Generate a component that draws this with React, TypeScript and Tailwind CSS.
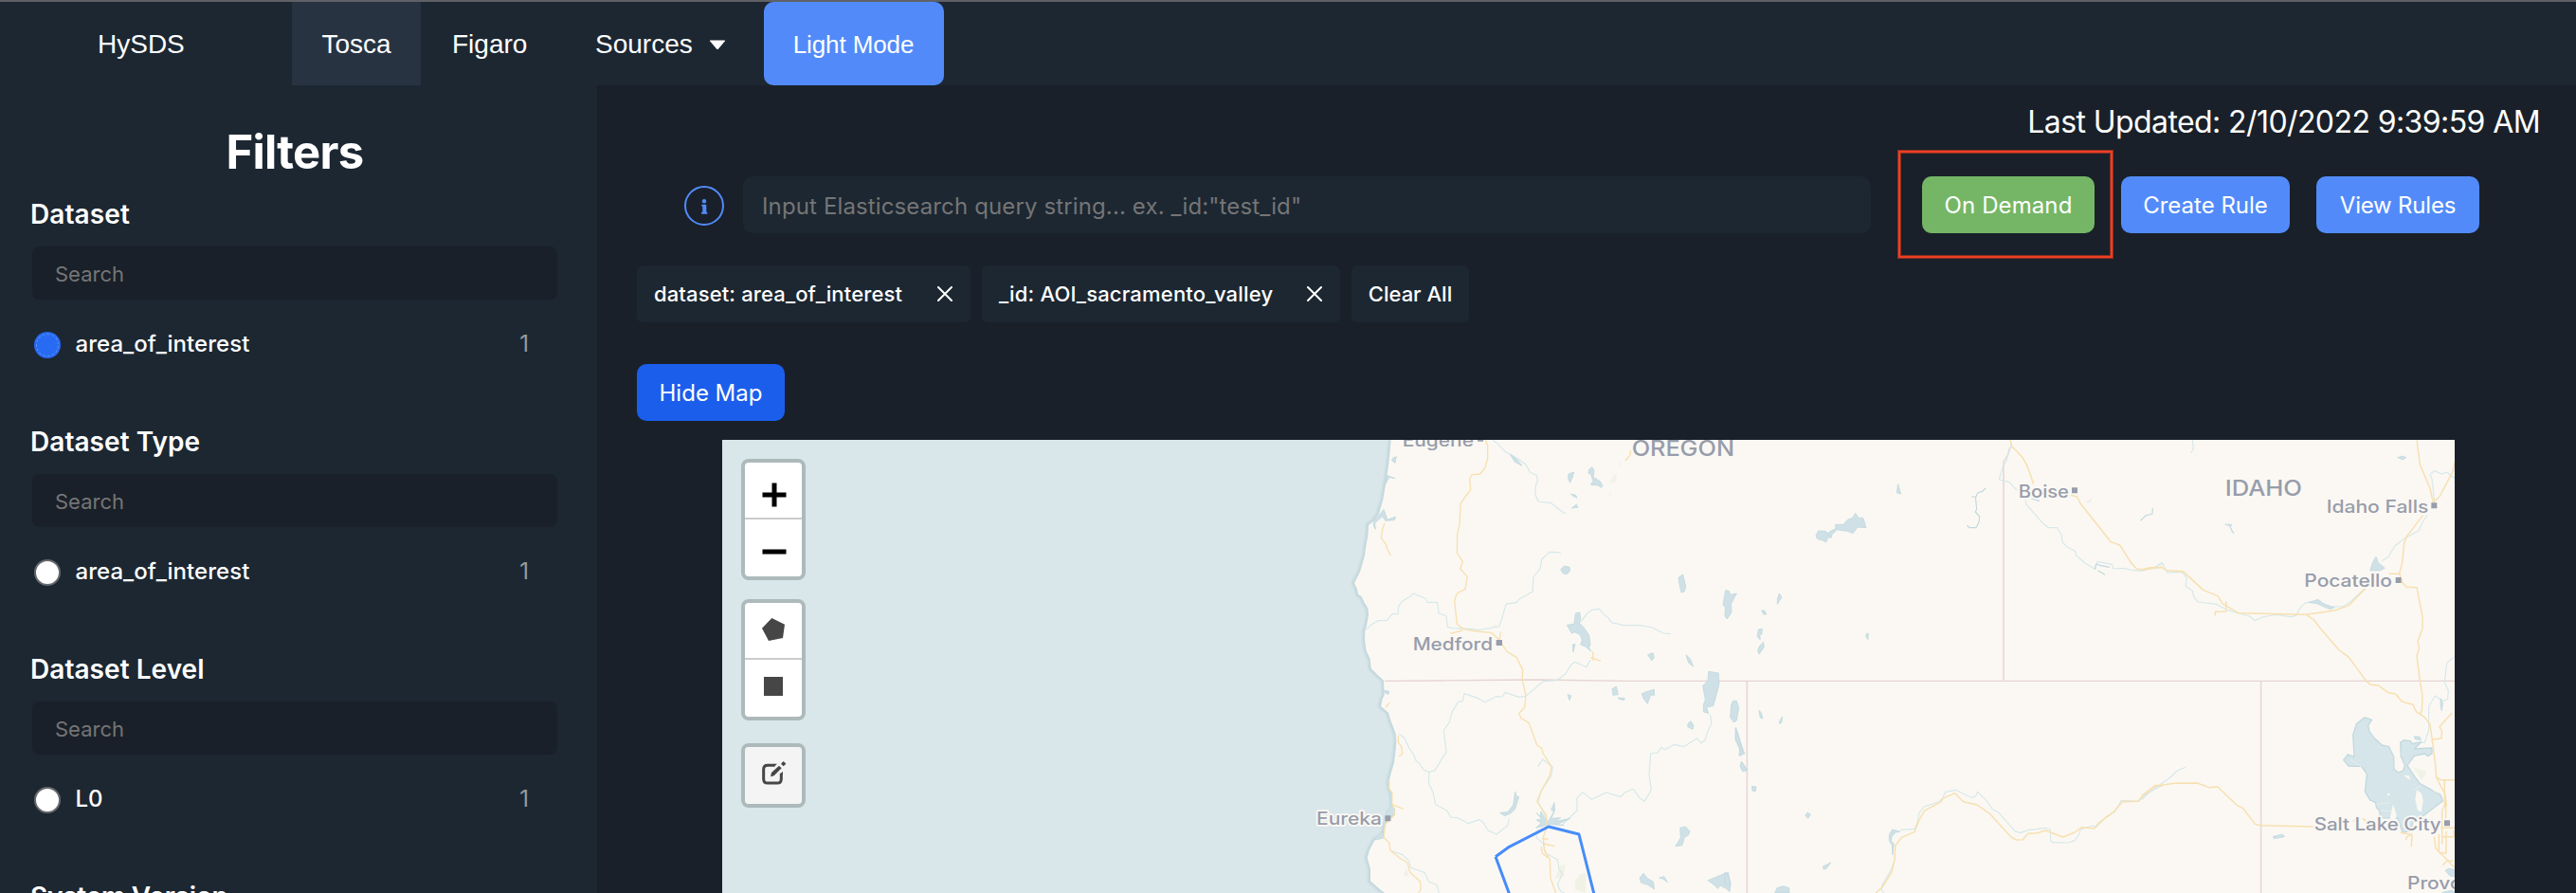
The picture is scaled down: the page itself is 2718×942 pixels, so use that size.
import React from "react";

type Group = { title: string; option?: string; count?: number; checked?: boolean; tracking: string };

const groups: Group[] = [
  { title: "Dataset", option: "area_of_interest", count: 1, checked: true, tracking: "tracking-[0.1px]" },
  { title: "Dataset Type", option: "area_of_interest", count: 1, tracking: "tracking-[0.05px]" },
  { title: "Dataset Level", option: "L0", count: 1, tracking: "tracking-[0.05px]" },
  { title: "System Version", tracking: "tracking-[-0.24px]" },
];

function Nav() {
  return (
    <nav className="flex h-[90px] shrink-0 items-stretch border-t-2 border-[#5f6166] bg-[#1c2732] font-['Liberation_Sans',sans-serif] text-[28px]">
      <a className="flex w-[308px] items-center pt-px pl-[103px]">HySDS</a>
      <a className="flex w-[136px] items-center bg-[#283341] pt-px pl-[31.500px]">Tosca</a>
      <a className="flex w-[184px] items-center pt-px pl-[33px]">Figaro</a>
      <a className="flex w-[178px] items-center pt-px">
        <span>Sources</span>
        <svg className="mt-px ml-[17px]" width="18" height="11" viewBox="0 0 18 11">
          <path d="M1.5 .5h15q1 0 .3 1L10 9.6q-1 1-2 0L1.200 1.500q-.7-1 .3-1z" fill="#fff" />
        </svg>
      </a>
      <button className="w-[190px] rounded-[10px] bg-[#528bf9] pt-[2px] pr-px text-[26px] tracking-[-0.1px]">Light Mode</button>
    </nav>
  );
}

function FilterGroup({ title, option, count, checked, tracking }: Group) {
  return (
    <section className="h-[240px] shrink-0 pr-[42px] pl-[34px]">
      <h2 className={`-ml-[2px] h-10 text-[28px] leading-10 font-semibold ${tracking}`}>{title}</h2>
      {option && (
        <>
          <input
            placeholder="Search"
            className="mt-[14px] block h-14 w-full rounded-lg bg-[#192029] pt-[2px] pl-[24px] text-[22px] placeholder:text-[#757575] placeholder:opacity-100"
          />
          <label className="mt-[27px] flex h-10 items-center pr-[30px] pl-[2px] text-[24px]">
            <span
              className={
                checked
                  ? "mt-px flex size-7 items-center justify-center rounded-full bg-[#286bf3]"
                  : "mt-px size-7 rounded-full border-2 border-[#66696c] bg-white"
              }
            >
              {checked && <span className="size-6 rounded-full border border-dashed border-[#5b8ff5]" />}
            </span>
            <span className="ml-[15.500px] flex-1 font-medium tracking-[0.05px]">{option}</span>
            <span className="text-[#999b9e]">{count}</span>
          </label>
        </>
      )}
    </section>
  );
}

function Sidebar() {
  return (
    <aside className="flex w-[630px] shrink-0 flex-col overflow-hidden bg-[#1c2732]">
      <h1 className="mt-[41px] mb-[15px] h-[60px] shrink-0 pr-[8px] text-center text-[49px] leading-[60px] font-bold tracking-[-0.7px]">Filters</h1>
      {groups.map((g) => (
        <FilterGroup key={g.title} {...g} />
      ))}
    </aside>
  );
}

function Cross() {
  return (
    <svg width="16" height="16" viewBox="0 0 16 16" stroke="#fff" strokeWidth="2" strokeLinecap="round">
      <path d="M1 1L15 15M15 1L1 15" />
    </svg>
  );
}

function MapLabel({ x, y, w, size = 54, children }: { x: number; y: number; w: number; size?: number; children: string }) {
  return (
    <text
      x={x - 3}
      y={y}
      textLength={w + 5}
      lengthAdjust="spacingAndGlyphs"
      fontSize={size}
      fill="#979dab"
      stroke="#fbf8f3"
      strokeWidth="10"
      strokeLinejoin="round"
      paintOrder="stroke"
      className="font-['Inter',sans-serif] font-medium"
    >
      {children}
    </text>
  );
}

const coast =
  "M263 42L258 100L250 160L238 230L225 275L210 298L192 312L190 345L182 390L180 408L165 460L147 495L156 515L160 532L170 538L178 555L190 575L192 595L186 630L181 645L180 675L185 710L197 735L200 765L220 785L240 803L242 850L236 862L231 885L255 905L262 930L268 945L278 972L280 1000L277 1030L273 1065L268 1080L257 1120L258 1145L266 1160L268 1200L276 1210L276 1225L262 1240L243 1262L240 1300L212 1308L195 1340L188 1365L198 1400L198 1438L225 1462L243 1476";

const riversWest = [
  "M585 42L605 58L625 80L650 92L690 120L703 145L725 155L727 172L720 190L720 215L729 237L770 242L790 258L805 270L817 275",
  "M183 643L200 628L222 614L250 613L268 592L285 594L287 568L300 552L320 540L335 528L374 545L378 556L410 556L414 590L438 600L442 634L456 638L520 640L540 644L605 633L615 605L627 562L660 556L670 545L712 522L713 477L735 450L740 420L765 397L795 398L800 402",
  "M865 617L885 590L900 580L923 577L935 592L950 604L960 620L1000 629L1050 629L1090 636L1125 654L1148 656",
  "M895 737L882 761L845 745L833 754L815 783L788 803L745 806L717 830L690 853L670 857L625 841L615 855L596 854L560 872L540 860L495 845L490 868L475 872L456 904L447 938L430 960L438 1030L428 1045L402 1088L383 1094L365 1085L355 1068L340 1055L336 1040L322 1020L305 985L288 973",
  "M383 1094L383 1130L397 1160L404 1196L440 1215L452 1236L475 1238L508 1256L542 1244L555 1252L570 1278L597 1290L633 1262L637 1240",
  "M1273 910L1278 940L1265 965L1258 990L1245 1002L1232 986L1190 1013L1160 1006L1130 1022L1118 1015L1108 1032L1085 1035L1080 1100L1087 1150L1065 1186L1050 1175L1030 1147L1003 1158L990 1172L945 1158L898 1180L870 1157L852 1175L852 1215L805 1260",
  "M728 1076L743 1053L775 1078L770 1105L738 1155L728 1190L745 1215L758 1262",
  "M728 1275L723 1300L745 1320L752 1350L790 1370L795 1400L805 1415L790 1450L800 1470L812 1476",
  "M262 1342L300 1355L320 1375L325 1395L370 1412L382 1440L408 1450L415 1476",
];
const riversMid = [
  "M905 42L905 65L890 110L880 125L868 168L900 176L925 202",
  "M952 232L953 245L1010 310L1025 320L1052 320L1066 345L1068 365L1082 380L1110 395L1112 408L1140 432L1170 450L1180 427L1225 436L1230 450L1265 448L1280 453L1318 457L1360 446L1385 430",
  "M555 1277L600 1273L608 1258L615 1222L630 1203L675 1188L690 1175L697 1157L730 1150L780 1174L793 1170L800 1156L825 1180L848 1212L865 1220L918 1280L935 1286L960 1277L1015 1270L1030 1276L1031 1310L1040 1316L1088 1317L1107 1310L1122 1290L1125 1275L1165 1263L1175 1268L1210 1232L1235 1218L1255 1183L1310 1186L1335 1162L1385 1135",
  "M538 1370L525 1405L498 1450L495 1465L503 1476",
];
const riversEast = [
  "M160 42L163 70L155 84",
  "M0 452L40 446L65 432L80 462L125 460L142 478L138 505L160 520L165 540L178 555L235 562L270 580L340 600L358 614L380 603L425 595L470 602L488 598L500 575L520 556L555 560L600 570L635 570L660 555L705 512",
  "M760 425L780 412L800 378L835 352L875 330L890 300L903 280",
  "M926 235L918 165L912 152L925 140L950 150L965 144L992 166",
  "M990 727L965 748L958 810L970 835L968 862L955 868L928 852L908 885L908 960L895 1000L883 1000",
  "M0 1180L15 1165L45 1142L90 1110L110 1090L138 1078",
];
const roadsWest = [
  "M562 42L569 60L569 100L560 132L545 150L520 152L512 165L515 200L498 222L483 245L480 310L473 340L472 400L490 427L482 450L505 475L498 514L472 528L464 550L472 625L492 641L535 648L580 652L606 675L630 712L660 730L680 770L678 800L690 850L686 888L668 908L675 923L700 938L725 1008L740 1018L745 1035L771 1076L765 1105L740 1150L725 1185L740 1210L755 1230L757 1265L745 1300L748 1340L766 1370L768 1430L785 1476",
  "M450 655L490 645M606 675L610 650M738 1328L742 1350L760 1365M742 1305L760 1305M745 1320L782 1328",
  "M243 305L236 325L232 353L247 372L250 385L262 408M1022 75L1020 90L1005 108",
  "M245 890L258 874M286 978L286 1000L295 1010L300 1035L288 1043M258 1120L257 1145L267 1160L266 1195L302 1210M268 1195L275 1228L245 1258L240 1300L258 1318L260 1340L290 1365L315 1380L323 1410L355 1440L358 1462L350 1476",
  "M902 712L903 740M895 730L927 742",
];
const roadsMid = [
  "M903 42L908 62L940 95L955 120L968 155L977 182M1095 217L1115 222L1125 243L1222 365L1250 375L1285 430L1303 450L1325 453L1385 444",
  "M478 1476L500 1455L528 1410L537 1370L540 1325L560 1300L600 1283L615 1245L632 1215L685 1187L690 1177L728 1160L755 1187L798 1197L838 1225L905 1298L922 1308L943 1307L960 1288L990 1286L1015 1278L1070 1299L1108 1284L1130 1268L1170 1272L1182 1255L1230 1220L1258 1187L1308 1186L1325 1165L1362 1138L1385 1136",
];
const roadsEast = [
  "M0 454L25 446L62 446L78 455L130 458L195 518L240 536L255 560L305 590L520 595L610 582L655 566L708 512",
  "M232 598L232 586L266 585L267 553",
  "M520 595L545 612L560 633L622 705L655 730L710 805L725 817L750 820L780 842L803 846L823 870L858 880L868 902L895 920L912 942L920 1000L928 1060L932 1110L960 1165L964 1200",
  "M870 42L880 120L912 195L922 240L942 222L985 140L990 112M890 280L838 348L830 370L824 430L815 465L782 466M815 465L825 495L838 508L870 509L888 600L888 640L873 680L878 700L870 725L880 805L888 850L886 900L880 910",
  "M920 990L948 987L950 965L942 950L955 935L982 906",
  "M0 1168L40 1137L103 1129L175 1128L212 1142L240 1140L300 1198L320 1208L358 1258L375 1262L545 1266",
  "M932 1110L945 1118L990 1118M958 1120L958 1200L950 1215L950 1320M962 1190L962 1240M925 1298L930 1335L965 1370L990 1396M940 1290L940 1348L963 1350L963 1280M945 1270L990 1270M948 1298L990 1298L986 1278M818 1285L855 1292L853 1330M855 1288L838 1300L835 1308M952 1388L965 1375L985 1375M668 1250L678 1240M698 1240L710 1248",
];
const lakesWest = [
  "M800 452L812 441L828 445L830 456L820 467L808 465Z",
  "M1173 478L1187 468L1196 505L1192 522L1182 525L1176 500Z",
  "M1322 518L1333 520L1337 532L1357 528L1340 560L1341 588L1327 609L1320 600L1321 570L1314 565Z",
  "M848 590L860 588L863 605L860 622L873 635L890 660L894 690L890 700L897 712L880 697L863 690L868 675L860 657L843 650L835 655L820 628L842 625Z",
  "M1268 775L1300 780L1302 815L1290 860L1283 884L1262 888L1268 908L1252 902L1252 880L1258 865L1250 820L1266 805Z",
  "M1345 868L1357 868L1364 890L1357 930L1348 936L1337 920L1340 880Z",
  "M1355 953L1362 975L1370 1000L1380 1030L1370 1042L1365 1015L1353 990Z",
  "M1372 1060L1390 1085L1378 1090L1370 1080Z",
  "M825 150L842 144L838 160L830 178L824 165Z",
  "M890 135L900 128L906 140L903 160L925 173L932 185L930 193L915 185L898 185L895 180L904 175L896 152L888 148Z",
  "M832 213L848 217L852 226L840 220Z",
  "M835 258L850 246L855 256Z",
  "M268 100L280 95L276 115L266 108Z",
  "M640 88L660 102L678 124L655 112Z",
  "M838 690L846 688L840 714Z",
  "M1076 722L1092 716L1096 732L1088 741Z",
  "M1197 722L1210 735L1220 759L1205 748Z",
  "M822 848L834 852L828 866Z",
  "M963 830L976 822L982 848L966 850Z",
  "M982 858L1003 860L1000 866L984 862Z",
  "M1057 845L1075 838L1096 832L1097 850L1085 850L1075 877L1062 860Z",
  "M1203 940L1212 932L1221 945L1218 958L1202 950Z",
  "M656 1155L660 1170L668 1172L655 1212L640 1225L622 1232L608 1222L632 1220L650 1198Z",
  "M724 1222L735 1235L738 1218L747 1235L760 1250L778 1220L770 1212L780 1190L782 1215L770 1240L800 1238L780 1250L830 1240L800 1254L780 1258L810 1262L765 1258L740 1266L722 1270L738 1255L724 1245L740 1242Z",
  "M1178 1270L1195 1266L1209 1280L1205 1292L1192 1300L1185 1325L1164 1328L1180 1300Z",
  "M1050 1428L1062 1414L1075 1430L1093 1440L1097 1464L1075 1450L1055 1444Z",
  "M1112 1428L1128 1424L1138 1442L1125 1432Z",
  "M1266 1436L1330 1410L1338 1445L1335 1472L1325 1462L1305 1452L1298 1462L1285 1450Z",
  "M215 1300L235 1280L240 1302L212 1308ZM250 1215L268 1200L276 1225L262 1235L245 1240ZM243 835L257 838L255 848L243 842ZM210 298L232 272L240 262L252 295L278 285L274 296L245 298L236 284L212 305L214 325L207 312ZM246 180L252 155L276 164L258 160Z",
];
const lakesMid = [
  "M288 345L296 330L320 331L330 345L320 366L308 360L292 355Z",
  "M328 335L345 325L352 330L340 340L335 354L330 348Z",
  "M350 310L375 310L388 295L405 288L413 274L422 288L438 290L447 320L420 318L405 338L388 331L350 326Z",
  "M548 182L557 213L544 210Z",
  "M172 528L180 540L166 562L166 546Z",
  "M116 582L125 582L132 594L122 594Z",
  "M106 642L118 640L117 656L110 660L112 674L102 665Z",
  "M122 682L124 698L108 720L104 708L110 694Z",
  "M448 655L454 655L453 674L446 665Z",
  "M108 898L115 905L120 924L112 922Z",
  "M182 918L180 934L175 941L171 936Z",
  "M33 953L42 975L55 1030L64 1034L45 1042L47 1020L34 990Z",
  "M53 1060L70 1088L57 1092L48 1075Z",
  "M86 1138L99 1140L97 1154L86 1152Z",
  "M262 1221L271 1228L263 1240L254 1230Z",
  "M310 1392L335 1380L320 1400L312 1400Z",
  "M158 1476L165 1460L185 1454L203 1460L204 1476Z",
  "M0 1410L12 1425L18 1454L0 1448Z",
  "M530 1275L555 1282L540 1284L528 1298L527 1312L535 1320L531 1355L529 1325L520 1310L520 1292Z",
];
const lakesEast = [
  "M808 98L825 93L837 98L825 105Z",
  "M741 411L748 430L769 448L755 456L722 456L730 430Z",
  "M528 556L558 547L575 560L610 573L595 578L575 570L550 558Z",
  "M263 309L285 310L280 318L291 338L286 335L278 315Z",
  "M415 1297L445 1290L452 1298L418 1304Z",
  "M960 1405L972 1398L990 1402L990 1424L975 1422Z",
  "M955 1473L990 1465L990 1476L950 1476Z",
  "M945 860L953 875L949 900L945 885Z",
  "M862 980L880 982L884 992L865 990Z",
];
const streamsMid = "M825 195L815 205L800 210L795 222L780 222M793 222L797 260L793 270L806 285L804 303L795 320L775 320L766 313M1315 298L1332 282L1353 276L1354 257M1172 453L1175 435L1190 440L1218 445M1180 455L1203 469M970 228L996 235";

function Basemap() {
  return (
    <svg className="absolute inset-0" width="1828" height="478" viewBox="762 464 1828 478">
      <rect x="762" y="464" width="1828" height="478" fill="#d9e6ea" />
      <g transform="translate(1380 450) scale(0.33333)" fill="none" strokeLinejoin="round">
        <path d={coast} stroke="#d0e0e5" strokeWidth="22" />
        <path d={coast} stroke="#c4d9de" strokeWidth="12" />
        <path d={`${coast}L3700 1500L3700 0L263 0Z`} fill="#fbf8f3" />
        <path d="M780 1430L800 1390L815 1385L810 1425ZM845 1440L862 1415L882 1412L878 1476L845 1465ZM302 1420L312 1395L320 1425ZM580 632L598 625L600 632Z" fill="#f1f2e6" />
        <path d="M965 155L978 148L975 175L956 178ZM985 115L992 112L990 132ZM952 205L960 210L956 222Z" fill="#f4f1ea" />
        <path d="M243 805L420 804L720 801L1000 805L3640 805" stroke="#e6d3d2" strokeWidth="4" />
        <path d="M1390 805V1476M2202 110V803M3017 805V1476" stroke="#e8d8d6" strokeWidth="5" />
        <path d="M2202 110L2215 90L2222 65" stroke="#e8d8d6" strokeWidth="4" />
        {riversWest.map((d) => <path key={d} d={d} stroke="#d6e8ea" strokeWidth="3.500" />)}
        {lakesWest.map((d) => <path key={d} d={d} fill="#cfe1e6" stroke="#c0d8de" strokeWidth="2.500" />)}
        {roadsWest.map((d) => <path key={d} d={d} stroke="#f7e0b0" strokeWidth="4" />)}
      </g>
      <g transform="translate(1820 450) scale(0.33333)" fill="none" strokeLinejoin="round">
        {riversMid.map((d) => <path key={d} d={d} stroke="#d6e8ea" strokeWidth="3.500" />)}
        <path d={streamsMid} stroke="#c0d8de" strokeWidth="3.500" />
        {lakesMid.map((d) => <path key={d} d={d} fill="#cfe1e6" stroke="#c0d8de" strokeWidth="2.500" />)}
        {roadsMid.map((d) => <path key={d} d={d} stroke="#f7e0b0" strokeWidth="4.500" />)}
        <path d="M1142 238L1162 225L1160 236L1148 243Z" fill="#f2f0e9" />
      </g>
      <g transform="translate(2260 450) scale(0.33333)" fill="none" strokeLinejoin="round">
        {riversEast.map((d) => <path key={d} d={d} stroke="#d6e8ea" strokeWidth="3.500" />)}
        {lakesEast.map((d) => <path key={d} d={d} fill="#cfe1e6" stroke="#c0d8de" strokeWidth="2" />)}
        <path
          d="M705 920L728 928L716 945L720 965L735 985L760 1008L782 1013L797 1045L798 1085L812 1095L828 1088L832 1070L820 1045L818 1000L828 992L850 995L855 1003L884 998L862 1020L918 1017L918 1035L905 1043L895 1035L862 1042L840 1072L858 1100L880 1130L945 1165L952 1185L900 1225L885 1235L862 1240L850 1280L825 1285L810 1240L755 1238L752 1215L742 1205L740 1190L722 1182L706 1155L712 1100L695 1075L655 1075L638 1055L652 1038L672 1045L668 975L680 940Z"
          fill="#d5e5e9"
          stroke="#c3d9df"
          strokeWidth="4"
        />
        <path d="M870 1150L885 1160L890 1185L884 1220L872 1212L865 1180ZM795 1195L806 1230L800 1250L785 1240ZM828 1103L845 1105L850 1120ZM775 1160L786 1162L780 1170Z" fill="#fbf8f3" />
        <path d="M695 1075L660 1055M742 1195L785 1190M755 1215L790 1217M860 1150L885 1135" stroke="#e9eeec" strokeWidth="3" />
        <path d="M860 1080L903 1092L885 1118ZM910 1140L940 1160L925 1155Z" fill="#f0f2e6" />
        {roadsEast.map((d) => <path key={d} d={d} stroke="#f7e0b0" strokeWidth="4.500" />)}
      </g>
      <g transform="translate(1380 450) scale(0.33333)">
        <MapLabel x={302} y={62} w={221}>Eugene</MapLabel>
        <MapLabel x={335} y={707} w={248}>Medford</MapLabel>
        <MapLabel x={30} y={1261} w={202}>Eureka</MapLabel>
        <MapLabel x={1028} y={93} w={320} size={69}>OREGON</MapLabel>
        <path d="M537 29h18v18h-18zM596 675h19v18h-19zM244 1231h18v18h-18zM2418 193h18v18h-18z" fill="#979dab" />
        <path d="M594 1361L637 1330L762 1266L858 1290L906 1480M594 1361L638 1480" fill="none" stroke="#468cfa" strokeWidth="9" strokeLinejoin="round" />
      </g>
      <g transform="translate(1820 450) scale(0.33333)">
        <MapLabel x={932} y={225} w={155}>Boise</MapLabel>
      </g>
      <g transform="translate(2260 450) scale(0.33333)">
        <MapLabel x={266} y={219} w={239} size={69}>IDAHO</MapLabel>
        <MapLabel x={587} y={273} w={318}>Idaho Falls</MapLabel>
        <MapLabel x={517} y={507} w={273}>Pocatello</MapLabel>
        <MapLabel x={548} y={1278} w={397}>Salt Lake City</MapLabel>
        <MapLabel x={843} y={1465} w={168}>Provo</MapLabel>
        <path d="M916 241h18v18h-18zM803 477h18v18h-18zM957 1246h18v18h-18z" fill="#979dab" />
      </g>
    </svg>
  );
}

const controlBox = "flex w-[68px] flex-col overflow-hidden rounded-lg border-4 border-[#adbabb] bg-white";

function MapControls() {
  return (
    <div className="absolute top-5 left-5 flex flex-col">
      <div className={controlBox}>
        <button className="h-[60px] border-b-2 border-[#ccc] pt-[10px] pl-[18px]">
          <svg width="26" height="26" viewBox="0 0 26 26">
            <path d="M0.500 13H25.500M13 .5V25.500" stroke="#000" strokeWidth="5" />
          </svg>
        </button>
        <button className="h-[60px] pt-[8px] pl-[18px]">
          <svg width="26" height="26" viewBox="0 0 26 26">
            <path d="M0.500 13H25.500" stroke="#000" strokeWidth="5" />
          </svg>
        </button>
      </div>
      <div className={`mt-5 ${controlBox}`}>
        <button className="h-[60px] border-b-2 border-[#ccc] pl-[18px]">
          <svg className="-mt-0.5" width="24" height="24" viewBox="0 0 72 72">
            <path d="M31 0L72 20L66 63L21 72L0 32Z" fill="#464646" />
          </svg>
        </button>
        <button className="flex h-[60px] items-center justify-center">
          <svg className="-mt-1" width="20" height="20" viewBox="0 0 20 20">
            <rect width="20" height="20" fill="#464646" />
          </svg>
        </button>
      </div>
      <div className={`mt-6 ${controlBox}`}>
        <button className="h-[60px] bg-[#f4f4f4] pl-[18px]">
          <svg className="-mt-1" width="26" height="26" viewBox="0 0 78 78" fill="none">
            <path d="M40 13H18Q5 13 5 26V56Q5 69 18 69H48Q61 69 61 56V38" stroke="#464646" strokeWidth="9" />
            <path d="M30 36L54 14L62 22L38 46L27 49Z" fill="#464646" />
            <path d="M68 0L76 8L68 16L60 8Z" fill="#464646" />
            <path d="M38 8H48L38 18ZM66 32V42L56 42Z" fill="#464646" />
          </svg>
        </button>
      </div>
    </div>
  );
}

function Main() {
  return (
    <main className="flex min-w-0 flex-1 flex-col overflow-hidden border-l border-[#161d26] bg-[#192029] pl-[41px]">
      <div className="h-[78px] shrink-0 pr-[38px] text-right text-[32px] leading-[77px] tracking-[-0.59px]">
        Last Updated: 2/10/2022 9:39:59 AM
      </div>
      <div className="mt-[18px] flex h-[60px] shrink-0 items-center pl-[50px] text-[24px]">
        <svg className="mt-[2px] mr-5" width="42" height="42" viewBox="0 0 42 42">
          <circle cx="21" cy="21" r="20" fill="none" stroke="#528bf9" strokeWidth="2" />
          <circle cx="21" cy="16.300" r="2.200" fill="#528bf9" />
          <path d="M18.300 19.800h5v8h1v2h-6.200v-2h1.200v-6h-1z" fill="#528bf9" />
        </svg>
        <input
          placeholder={'Input Elasticsearch query string... ex. _id:"test_id"'}
          className="h-[60px] w-[1190px] rounded-[10px] bg-[#1c2732] pt-[2px] pl-[20px] tracking-[0.13px] placeholder:text-[#757575] placeholder:opacity-100"
        />
        <div className="relative ml-[54px]">
          <button className="h-[60px] w-[182px] rounded-[10px] bg-[#75b666] pt-[2px] tracking-[0.1px]">On Demand</button>
          <span className="absolute -top-7 -left-[26px] h-[115px] w-[228px] border border-[#8b2e22] shadow-[inset_0_0_0_2px_#ec4025,inset_0_0_0_3px_#8b2e22]" />
        </div>
        <button className="ml-7 h-[60px] w-[178px] rounded-[10px] bg-[#528bf9] pt-[2px]">Create Rule</button>
        <button className="ml-7 h-[60px] w-[172px] rounded-[10px] bg-[#528bf9] pt-[2px] tracking-[-0.2px]">View Rules</button>
      </div>
      <div className="mt-[34px] flex h-[60px] shrink-0 gap-3 text-[22px] font-medium">
        <div className="flex w-[352px] items-center justify-between rounded-md bg-[#1c2732] pr-[19px] pl-[18px] tracking-[0.13px]">
          dataset: area_of_interest
          <Cross />
        </div>
        <div className="flex w-[378px] items-center justify-between rounded-md bg-[#1c2732] pr-[19px] pl-[18px] tracking-[0.19px]">
          _id: AOI_sacramento_valley
          <Cross />
        </div>
        <button className="w-[124px] rounded-md bg-[#1c2732]">Clear All</button>
      </div>
      <button className="mt-11 h-[60px] w-[156px] shrink-0 rounded-[10px] bg-[#1b5eec] pt-[2px] text-[24px]">Hide Map</button>
      <div className="relative mt-5 ml-[90px] h-[478px] w-[1828px] shrink-0">
        <Basemap />
        <MapControls />
      </div>
    </main>
  );
}

export default function App() {
  return (
    <div className="flex h-[942px] w-[2718px] flex-col overflow-hidden bg-[#192029] font-['Inter',sans-serif] text-white">
      <Nav />
      <div className="flex min-h-0 flex-1">
        <Sidebar />
        <Main />
      </div>
    </div>
  );
}
